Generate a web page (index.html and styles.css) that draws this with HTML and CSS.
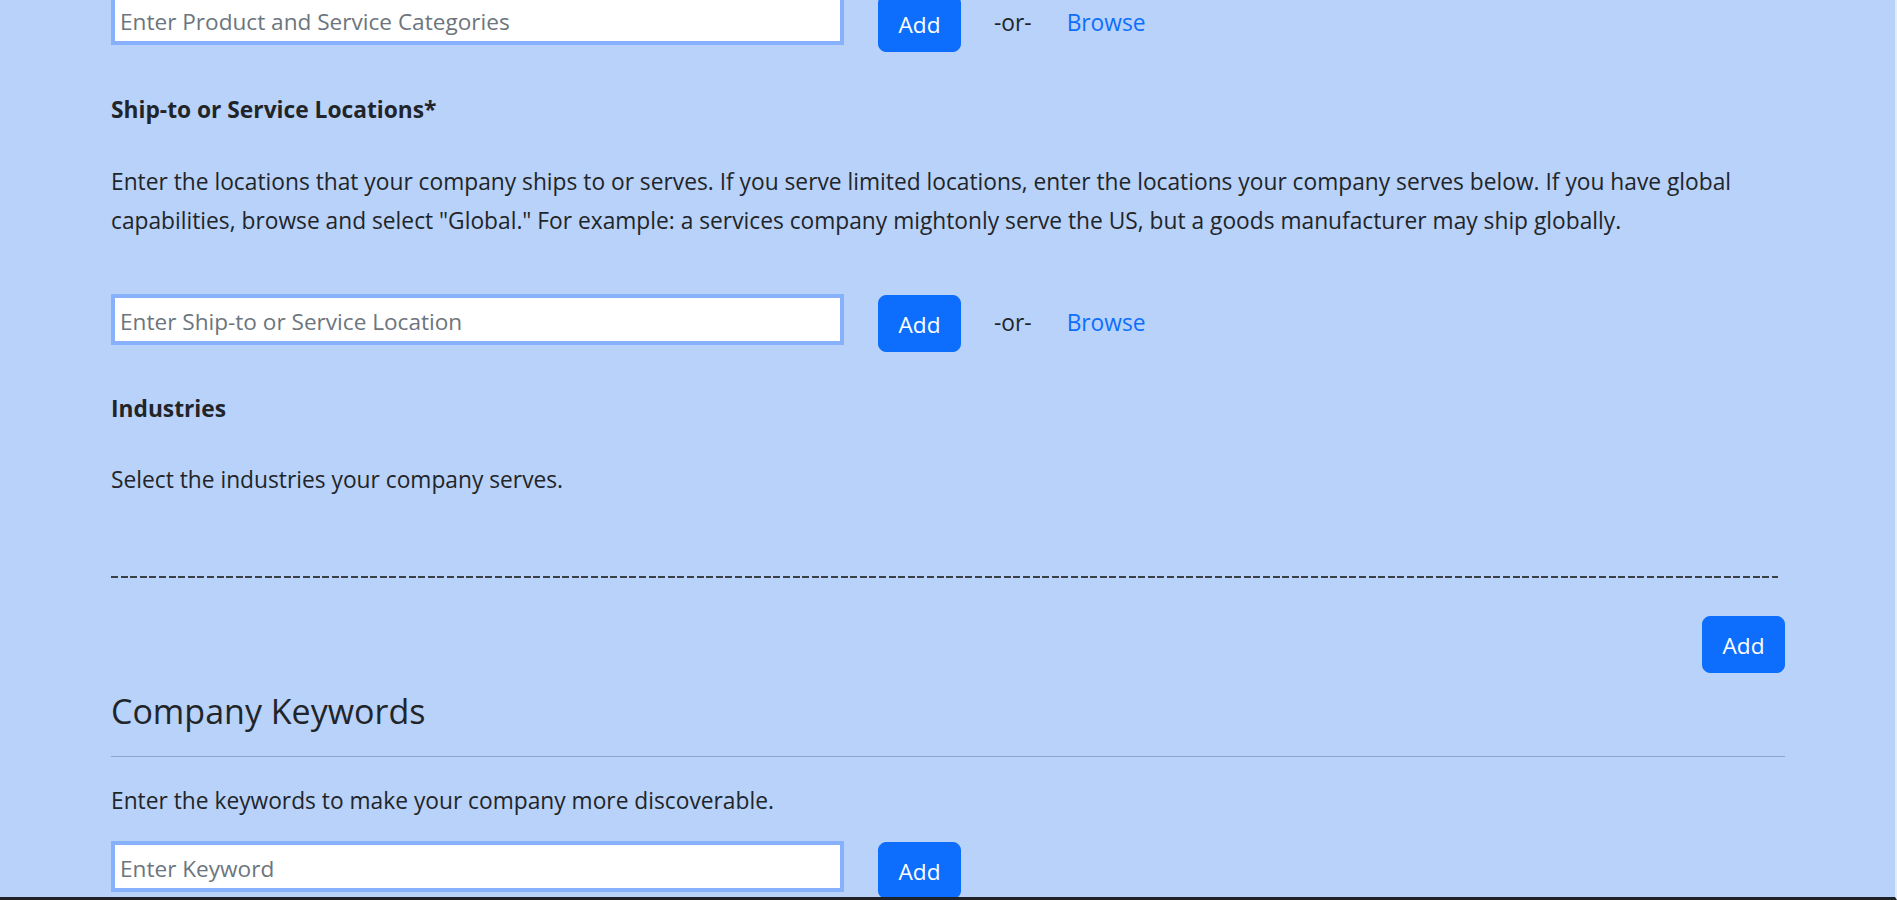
FILE: index.html
```html
<!DOCTYPE html>
<html lang="en">
<head>
<meta charset="utf-8">
<title>Company Profile</title>
<link rel="stylesheet" href="styles.css">
</head>
<body>
<div class="frame">
  <main class="form">
    <div class="entry-row first">
      <input class="entry-input" type="text" placeholder="Enter Product and Service Categories">
      <button class="btn-add" type="button">Add</button>
      <span class="or">-or-</span>
      <a class="browse" href="#">Browse</a>
    </div>

    <h6 class="field-label label-ship">Ship-to or Service Locations*</h6>
    <p class="field-help help-ship">Enter the locations that your company ships to or serves. If you serve limited locations, enter the locations your company serves below. If you have global<br>capabilities, browse and select "Global." For example: a services company mightonly serve the US, but a goods manufacturer may ship globally.</p>

    <div class="entry-row second">
      <input class="entry-input" type="text" placeholder="Enter Ship-to or Service Location">
      <button class="btn-add" type="button">Add</button>
      <span class="or">-or-</span>
      <a class="browse" href="#">Browse</a>
    </div>

    <h6 class="field-label label-ind">Industries</h6>
    <p class="field-help help-ind">Select the industries your company serves.</p>

    <div class="dashes"></div>

    <div class="end-row">
      <button class="btn-add" type="button">Add</button>
    </div>

    <h3 class="section-title">Company Keywords</h3>
    <hr class="section-rule">
    <p class="field-help help-kw">Enter the keywords to make your company more discoverable.</p>

    <div class="entry-row third">
      <input class="entry-input" type="text" placeholder="Enter Keyword">
      <button class="btn-add" type="button">Add</button>
    </div>
  </main>
</div>
</body>
</html>
```

FILE: styles.css
```css
* { box-sizing: border-box; }

html, body {
  margin: 0;
  padding: 0;
  height: 100%;
  overflow: hidden;
}

body {
  background: #b9d2f9;
  color: #212529;
  font-family: "Open Sans", "Noto Sans", "Liberation Sans", sans-serif;
  font-size: 22.75px;
  line-height: 39px;
}

.frame {
  height: 900px;
  border-right: 2px solid #e4ecf9;
  border-bottom: 3px solid #1f2229;
  overflow: hidden;
}

.form {
  width: 1785px;
  padding-left: 111px;
}

.entry-row {
  display: flex;
  align-items: flex-start;
  height: 58px;
}

.entry-row.first { margin-top: -6px; }
.entry-row.second { margin-top: 54px; }
.entry-row.third { margin-top: 21px; }

.entry-input {
  width: 733px;
  height: 51px;
  border: 4px solid #88b1fd;
  background: #fff;
  padding: 3px 5px 0;
  font-family: inherit;
  font-size: 22.6px;
  color: #212529;
  outline: none;
}

.entry-input::placeholder { color: #6c757d; }

.btn-add {
  margin-left: 34px;
  margin-top: 1px;
  width: 83px;
  height: 57px;
  border: 1px solid #0d6efd;
  border-radius: 8px;
  background: #0d6efd;
  color: #fff;
  font-family: inherit;
  font-size: 22.6px;
  line-height: 36px;
  padding: 2px 0 0;
  cursor: pointer;
}

.or {
  margin-left: 33px;
  margin-top: 9px;
  line-height: 39px;
}

.browse {
  margin-left: 35px;
  margin-top: 9px;
  line-height: 39px;
  color: #0d6efd;
  text-decoration: none;
}

.field-label {
  margin: 0;
  font-size: 22.75px;
  font-weight: 700;
  line-height: 39px;
}

.label-ship { margin-top: 38px; }
.label-ind { margin-top: 37px; }

.field-help {
  margin: 0;
  line-height: 39px;
}

.help-ship { margin-top: 33px; }
.help-ind { margin-top: 32px; }
.help-kw { margin-top: 24px; }

.dashes {
  margin-top: 77px;
  width: 1667px;
  height: 2px;
  background: repeating-linear-gradient(90deg, #3a3f48 0 7px, transparent 7px 9.6px);
}

.end-row {
  margin-top: 38px;
  display: flex;
  justify-content: flex-end;
  width: 1674px;
}

.end-row .btn-add { margin: 0; }

.section-title {
  margin: 16px 0 0;
  font-size: 34px;
  font-weight: 400;
  line-height: 45px;
}

.section-title + .section-rule { margin-top: 22px; }

.section-rule {
  margin: 0;
  width: 1674px;
  border: 0;
  border-top: 1px solid #8ea5c8;
}
```
